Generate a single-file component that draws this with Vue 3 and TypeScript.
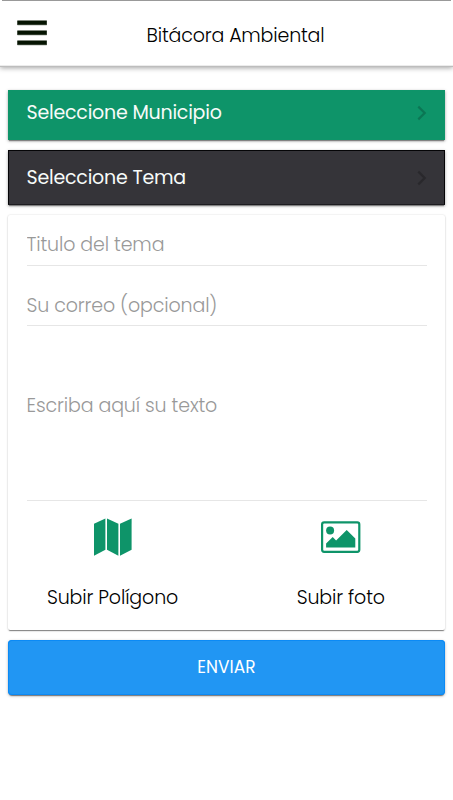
<script setup lang="ts">
import { ref } from 'vue'

interface Selector {
  id: string
  label: string
}

const selectors: Selector[] = [
  { id: 'municipio', label: 'Seleccione Municipio' },
  { id: 'tema', label: 'Seleccione Tema' },
]

const topic = ref('')
const email = ref('')
const body = ref('')
</script>

<template>
  <div class="screen">
    <header class="toolbar">
      <button class="menu" aria-label="Menú">
        <svg width="30" height="26" viewBox="0 0 30 26">
          <path d="M.5 .8h29.2v4H.5zM.5 10.8h29.2v4H.5zM.5 20.8h29.2v4H.5z" fill="#061402" stroke="#061402" stroke-width=".5" stroke-linejoin="round" />
        </svg>
      </button>
      <h1 class="title">Bitácora Ambiental</h1>
    </header>

    <main class="content">
      <button v-for="s in selectors" :key="s.id" class="selector" :class="s.id">
        <span class="label">{{ s.label }}</span>
        <svg class="chevron" width="10" height="16" viewBox="0 0 10 16">
          <path d="M1.3 1.6 7.7 8l-6.4 6.4" fill="none" stroke="currentColor" stroke-width="2.2" />
        </svg>
      </button>

      <form class="card" @submit.prevent>
        <input v-model="topic" class="field topic" placeholder="Titulo del tema" />
        <input v-model="email" class="field email" placeholder="Su correo (opcional)" />
        <textarea v-model="body" class="field body" placeholder="Escriba aquí su texto"></textarea>
        <div class="uploads">
          <button type="button" class="upload polygon">
            <svg width="38" height="38" viewBox="0 0 38 38" fill="#0e9469">
              <path d="M0 5.8 11.4 .6v31.2L0 37.8z" />
              <path d="M13 .6l11.4 5.2v32L13 31.8z" />
              <path d="M26 5.8 37.6 .6v31.2L26 37.8z" />
            </svg>
            <span class="caption">Subir Polígono</span>
          </button>
          <button type="button" class="upload photo">
            <svg width="40" height="38" viewBox="0 0 40 38">
              <rect x="1.1" y="4.4" width="37.2" height="29.4" rx="2" fill="none" stroke="#0e9469" stroke-width="2.2" />
              <circle cx="9.1" cy="12.5" r="4" fill="#0e9469" />
              <path d="M5.1 29.6v-4.2l6.6-6.4 3.4 3.4L25.7 12l8.6 8.6v9z" fill="#0e9469" />
            </svg>
            <span class="caption">Subir foto</span>
          </button>
        </div>
      </form>

      <button class="send"><span>ENVIAR</span></button>
    </main>
  </div>
</template>

<style>
body {
  background: #fff;
}
</style>

<style scoped>
.screen {
  height: 800px;
  overflow: hidden;
  background: #fff;
  font-family: Poppins, Inter, sans-serif;
  font-size: 19px;
  font-weight: 300;
  letter-spacing: -0.13px;
  color: #000;
}

button {
  padding: 0;
  border: 0;
  background: none;
  font: inherit;
  letter-spacing: inherit;
  color: inherit;
}

.toolbar {
  display: grid;
  grid-template-columns: 60px 1fr 60px;
  align-items: center;
  box-sizing: border-box;
  height: 65px;
  background: linear-gradient(#999, #999) 2px 0 / 449px 1px no-repeat #fff;
  box-shadow: 0 1px 0 #ececec, 0 2px 0 #bdbdbd, 0 3px 5px rgba(0, 0, 0, 0.36);
}

.menu {
  display: flex;
  padding: 1px 0 0 17px;
}

.title {
  margin: 6px 0 0;
  padding-left: 18px;
  text-align: center;
  white-space: nowrap;
  font-size: 19px;
  font-weight: 300;
  line-height: 28px;
  letter-spacing: -0.16px;
}

.content {
  display: flex;
  flex-direction: column;
  padding: 25px 8px 0;
}

.selector {
  display: flex;
  align-items: center;
  justify-content: space-between;
  box-sizing: border-box;
  padding: 0 18px 0 18.5px;
  color: #f7fbf9;
  font-weight: 400;
  letter-spacing: -0.22px;
  box-shadow: 0 2px 1px -1px rgba(0, 0, 0, 0.35), 0 1px 3px rgba(0, 0, 0, 0.35);
}

.municipio {
  height: 50px;
  margin-bottom: 10px;
  padding-bottom: 5px;
  background: #0e9469;
}

.tema {
  height: 55px;
  margin-bottom: 10px;
  padding-right: 17px;
  padding-left: 17.5px;
  border: 1px solid #050507;
  border-bottom-color: #1d1c20;
  background: #353439;
}

.municipio .chevron {
  color: #0b7654;
}

.tema .chevron {
  color: #29282c;
}

.card {
  display: flex;
  flex-direction: column;
  box-sizing: border-box;
  height: 415px;
  margin-bottom: 10px;
  padding: 9px 18px 0 18.5px;
  border-radius: 2px;
  background: #fff;
  box-shadow: 0 2px 1px -1px rgba(0, 0, 0, 0.4), 0 0 2px rgba(0, 0, 0, 0.14), 0 1px 2px rgba(0, 0, 0, 0.16);
}

.field {
  box-sizing: border-box;
  width: 100%;
  padding: 0;
  border: 0;
  border-bottom: 1px solid #e6e6e6;
  outline: 0;
  background: none;
  font: inherit;
  letter-spacing: inherit;
  resize: none;
}

.field::placeholder {
  color: #999;
  opacity: 1;
}

.topic {
  height: 42px;
}

.email {
  height: 60px;
  padding-top: 19px;
}

.body {
  height: 175px;
  padding-top: 66px;
  line-height: 28px;
}

.uploads {
  display: grid;
  grid-template-columns: 172px 1fr;
  column-gap: 56px;
  padding-top: 17px;
}

.upload {
  display: flex;
  flex-direction: column;
  align-items: center;
  gap: 28px;
}

.upload svg {
  display: block;
}

.caption {
  line-height: 28px;
  white-space: nowrap;
}

.send {
  height: 55px;
  padding-bottom: 1px;
  border-radius: 4px;
  background: #2196f3;
  box-shadow: inset 0 0 0 1px #0b8af5, 0 2px 1px -1px rgba(0, 0, 0, 0.4), 0 1px 3px rgba(0, 0, 0, 0.3);
  color: #fff;
  font-size: 17px;
  font-weight: 400;
  letter-spacing: 0.05px;
}
</style>
